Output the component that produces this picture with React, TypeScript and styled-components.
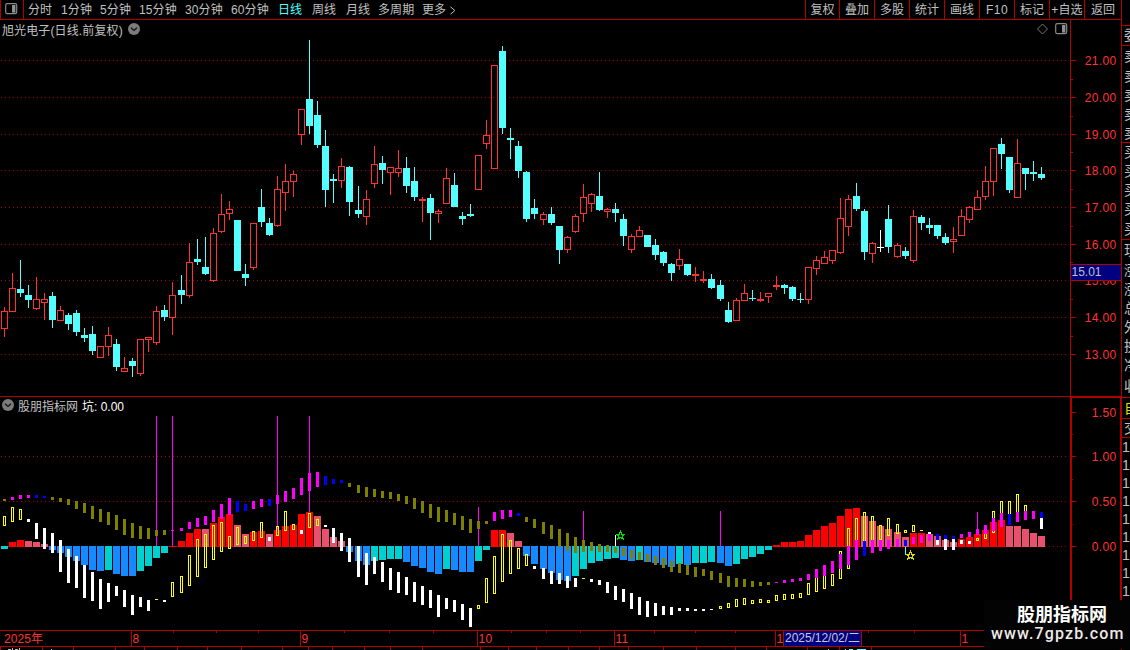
import React from "react";
import styled, { createGlobalStyle } from "styled-components";

const RED = "#b00000";
const LABEL = "#ff3232";
const CYAN = "#54ffff";
const GREY = "#c0c0c0";

const Global = createGlobalStyle`
  * { box-sizing: border-box; }
  html, body { margin: 0; padding: 0; background: #000; overflow: hidden; }
  body { font-family: "Liberation Sans", "Noto Sans CJK SC", sans-serif; font-size: 12px; }
`;

const Screen = styled.div`
  position: relative;
  display: flex;
  width: 1130px;
  height: 650px;
  overflow: hidden;
  background: #000;
  color: ${GREY};
`;
const Main = styled.div`
  display: flex;
  flex-direction: column;
  width: 1121px;
  flex: none;
`;
const TopBar = styled.div`
  display: flex;
  height: 20px;
  flex: none;
  border-bottom: 1px solid ${RED};
  line-height: 20px;
  white-space: nowrap;
`;
const IconCell = styled.div`
  display: flex;
  align-items: center;
  width: 24px;
  padding: 0 0 2px 4px;
  margin-right: 4px;
  border-left: 1px solid ${RED};
  border-right: 1px solid ${RED};
`;
const Period = styled.span<{ $w: number; $active?: boolean }>`
  width: ${(p) => p.$w}px;
  color: ${(p) => (p.$active ? CYAN : GREY)};
  letter-spacing: 0.12px;
  display: flex;
  align-items: center;
  padding-top: 1px;
  gap: 3px;
`;
const Tools = styled.div`
  display: flex;
  margin-left: auto;
`;
const Tool = styled.span<{ $w: number; $wide?: boolean }>`
  width: ${(p) => p.$w}px;
  border-left: 1px solid ${RED};
  text-align: center;
  letter-spacing: ${(p) => (p.$wide ? 0.5 : 0.1)}px;
`;
const Panel = styled.section<{ $h: number }>`
  position: relative;
  height: ${(p) => p.$h}px;
  flex: none;
  overflow: hidden;
`;
const PanelHead = styled.div<{ $h: number; $gap: number }>`
  position: absolute;
  inset: 0 0 auto 0;
  display: flex;
  align-items: center;
  height: ${(p) => p.$h}px;
  padding: 0 53px 0 2px;
  gap: ${(p) => p.$gap}px;
  white-space: nowrap;
`;
const Title = styled.span`
  letter-spacing: 0.12px;
`;
const HeadTools = styled.div`
  display: flex;
  align-items: center;
  gap: 7px;
  margin-left: auto;
`;
const Value = styled.span`
  color: #fff;
`;
const Strip = styled.aside`
  width: 9px;
  flex: none;
  overflow: hidden;
  border-left: 1px solid ${RED};
  padding-top: 25px;
`;
const StripCell = styled.div<{ $h: number; $line?: boolean; $c?: string; $one?: boolean }>`
  height: ${(p) => p.$h}px;
  line-height: ${(p) => p.$h - (p.$line ? 1 : 0)}px;
  border-top: ${(p) => (p.$line ? `1px solid ${RED}` : "0")};
  padding-left: ${(p) => (p.$one ? 0 : 2)}px;
  width: 30px;
  font-size: 14px;
  color: ${(p) => p.$c ?? GREY};
`;
const Watermark = styled.div`
  position: absolute;
  right: 0;
  bottom: 1px;
  width: 146px;
  height: 49px;
  background: #030303;
  color: #fff;
  white-space: nowrap;
`;
const MarkName = styled.div`
  padding: 1px 0 0 33px;
  font: bold 18px/24px "Noto Sans CJK SC", sans-serif;
`;
const MarkUrl = styled.div`
  padding: 1px 0 0 7px;
  font: 500 16px/15px Roboto, sans-serif;
  letter-spacing: 1.12px;
  color: #f0eaea;
`;
const Drawing = styled.svg`
  display: block;
`;

type Tone = "r" | "c" | "w";
type Candle = [Tone, number, number, number, number];

// tone, high, body top, body bottom, low
const candles: Candle[] = `
r307,311,329,337 r273,288,312,312 c260,289,293,297 c285,295,300,308 r277,299,309,310 r293,299,303,320 c292,296,320,328 r306,310,321,321 c313,315,324,330 c310,313,332,336
c328,335,338,342 c326,334,351,355 r346,346,358,358 r327,335,347,356 c339,344,367,371 r357,368,372,372 c358,361,366,377 r339,339,374,376 r337,337,340,352 r306,311,343,345
c305,310,317,321 r282,295,318,335 c275,290,295,304 r243,262,296,298 c239,259,262,265 c237,267,274,275 r228,233,281,282 r194,214,232,233 r201,209,214,220 c220,220,271,271
c264,274,278,286 r223,223,268,270 c189,207,222,227 c218,223,235,236 r176,189,226,227 r164,181,193,211 r171,174,182,197 r109,109,135,145 c40,99,126,134 c101,115,145,148
c130,146,190,207 c174,179,181,203 r158,166,181,188 c166,167,202,216 c186,210,214,218 r190,199,217,225 r146,164,184,188 c156,163,170,184 r167,167,173,195 r150,168,173,177
c157,168,186,193 c167,181,197,201 r197,199,201,222 c194,198,213,240 r209,211,214,223 r168,178,204,204 c173,185,207,207 c212,216,219,225 c204,214,216,217 r155,155,190,190
r120,135,144,149 r65,65,169,169 c46,51,128,134 c128,138,140,159 c141,146,171,178 c171,172,219,222 c199,208,214,219 r212,214,220,225 c207,214,223,225 c226,226,250,264
r236,237,250,253 r214,216,232,233 r184,197,214,222 r193,194,204,212 c172,196,210,211 r208,209,212,218 c203,209,213,222 c214,219,236,246 r234,236,250,253 r226,230,237,237
c235,235,247,247 c239,245,255,260 c251,252,263,266 c263,264,273,281 r249,259,266,270 c264,264,275,276 r267,274,276,282 r271,279,281,283 c274,279,288,289 c280,285,299,301
c302,310,322,323 r298,300,321,321 r284,293,301,301 c290,298,299,301 r292,299,301,302 r293,293,297,303 r276,285,287,290 c284,285,288,294 c286,287,299,301 c293,299,300,303
r267,267,300,304 r256,260,269,275 r251,257,264,264 r250,250,261,264 r198,218,253,254 r195,199,227,236 c183,196,209,211 c209,211,252,260 r242,243,254,263 w230,247,248,252
c205,219,247,253 r243,245,257,258 c247,251,256,259 r210,216,261,263 c215,217,223,230 c218,225,228,234 c225,225,236,239 c233,237,243,245 r227,239,242,253 r209,216,236,236
r206,207,220,223 r190,197,210,210 r166,181,197,200 r148,148,182,196 c138,144,154,169 c157,157,190,193 r139,163,198,198 c168,168,174,190 c161,172,174,181 c167,174,178,180
`
  .trim()
  .split(/\s+/)
  .map((s) => {
    const n = s.slice(1).split(",").map(Number);
    return [s[0] as Tone, n[0], n[1], n[2], n[3]];
  });

// histogram: colour key and the far edge from the zero line
const bars = `
t549 r542 r540 p541 p542 p544 b550 b553 b557 b561 b565 b570 b571 t570 b574 b576 b576 t571 t566 t558 t553 r546 r541 r533 r529 p529 r523 r517 r514 p525
p534 r532 r531 p534 r530 r526 r525 r514 r512 p516 p529 p537 p541 b552 b561 b565 t561 t560 t559 t559 b562 b566 b568 b572 b574 t569 b570 b572 b572 t561
t550 r530 r530 p533 p541 b556 b564 b569 b573 b580 b581 t576 t569 t563 t561 t559 t558 b560 b561 t560 b562 b563 b565 b567 t564 b565 t563 t563 t562 b563
b566 t564 t559 t557 t554 t550 r545 r542 r542 r541 r535 r530 r526 r523 r516 r509 r508 p516 p521 p526 p529 p532 p537 r533 r533 p534 p536 p540 p542 r539
r537 r534 r530 r522 r520 p526 p526 p529 p533 p536
`
  .trim()
  .split(/\s+/);

const barFill: Record<string, string> = {
  t: "#00d0d0",
  b: "#1589ff",
  r: "#ff0000",
  p: "#e8506e",
};

type Dash = { k: string; a: number; b: number };
const parseDashes = (s: string): Dash[] =>
  s
    .trim()
    .split(/\s+/)
    .map((t) => {
      const [a, b] = t.slice(1).split("-").map(Number);
      return { k: t[0], a, b };
    });

const trend = parseDashes(`
O499-501 M497-500 M495-499 M495-498 B495-498 B496-498 O497-500 O498-502 O499-505 O501-509 O503-513 O506-519 O509-522 O512-525 O515-530 O519-535 O523-538 O526-539 O528-539 O530-536
O530-535 M530-531 M528-531 M522-529 M518-527 M516-525 M510-522 M504-519 M498-515 B501-512 B504-511 M501-509 M499-507 B499-506 M495-504 M491-502 M488-499 M478-495 M473-491 M472-487
B476-485 B479-484 B480-483 O483-487 O485-493 O487-497 O489-497 O491-498 O492-499 O494-501 O496-504 O498-509 O501-513 O504-518 O507-522 O510-522 O513-525 O516-530 O519-533 O521-529
O521-524 M512-521 M510-519 M510-517 B513-516 O517-522 O519-528 O522-534 O525-539 O529-547 O533-551 O537-553 O540-552 O542-551 O544-552 O545-552 O547-553 O548-556 O550-559 O552-560
O554-562 O556-565 O558-568 O561-572 O563-573 O565-575 O567-577 O569-576 O571-580 O573-583 O576-587 O578-587 O579-587 O581-587 O582-586 O582-585 M582-583 M580-583 M579-582 M578-581
M574-580 M569-578 M565-576 M561-573 M554-569 M546-565 M540-560 B541-556 M540-553 M540-551 M540-549 M539-547 B540-546 M537-544 M535-543 M534-541 B534-540 B535-539 B536-539 M534-538
M532-537 M529-535 M525-534 M518-531 M513-527 B514-525 M512-522 M511-520 M511-519 B512-518
`);

const signal = parseDashes(`
Y516-526 Y507-522 Y509-520 W519-522 W523-539 W528-549 W533-553 W540-572 W549-583 W556-588 W565-598 W572-601 W579-609 W583-602 W586-596 W590-607 W595-615 W597-607 W600-611 Y599-600
W600-602 Y582-597 Y576-593 Y555-586 Y539-577 Y534-568 Y525-560 Y522-552 Y536-549 Y527-545 Y536-544 Y531-541 Y522-538 W537-541 Y526-536 Y511-531 Y524-530 W530-534 Y513-528 Y519-526
W525-527 W528-543 W533-551 W538-562 W546-577 W553-585 W557-574 W562-582 W568-590 W572-593 W577-595 W582-602 W586-605 W590-608 W595-617 W598-609 W600-612 W604-620 W608-627 Y605-609
Y578-603 Y556-594 Y534-582 Y540-574 Y548-569 Y554-566 W566-569 W568-579 W571-584 W573-584 W576-588 W578-587 Y578-579 W579-582 W580-585 W582-593 W586-600 W589-602 W593-609 W597-615
W601-617 W603-616 W606-615 W607-615 W608-611 W608-611 W609-611 W609-611 W609-610 Y606-609 Y603-608 Y599-607 Y598-605 Y600-604 Y599-603 Y600-603 Y595-601 Y594-600 Y594-599 Y593-598
Y583-595 Y576-592 Y574-589 Y574-586 Y551-579 Y528-569 Y518-545 Y512-543 Y516-541 Y525-540 Y518-536 Y524-534 Y530-533 Y525-532 Y530-531 W532-535 W538-545 W539-550 W539-550 W540-544
W541-544 Y538-541 Y532-539 Y511-533 Y501-515 Y501-515 Y494-513 Y505-512 W512-512 W518-529
`);

const dashFill: Record<string, string> = {
  O: "#808000",
  M: "#ff00ff",
  B: "#0000ff",
  W: "#ffffff",
  Y: "#ffff00",
};

// bar spacing is slightly over 8px, so the pitch slips by one at these indices
const slips = [22, 44, 67, 89, 111];
const xAt = (i: number) => 4 + 8 * i + slips.filter((s) => i >= s).length;

const priceGrid: [number, string][] = [
  [60, "21.00"], [97, "20.00"], [134, "19.00"], [170, "18.00"], [207, "17.00"],
  [244, "16.00"], [280, "15.00"], [317, "14.00"], [354, "13.00"],
];
const priceMinor = [79, 116, 152, 189, 226, 262, 299, 336];
const spikes: [number, number, number, string][] = [
  [156, 416, 546, "#ff00ff"], [172, 416, 546, "#ff00ff"], [277, 416, 530, "#ff00ff"],
  [309, 416, 513, "#ff00ff"], [478, 507, 546, "#ff00ff"], [583, 511, 546, "#ff00ff"],
  [720, 511, 546, "#ff00ff"], [977, 512, 531, "#ff00ff"], [615, 535, 546, "#ffffff"],
  [905, 546, 555, CYAN],
];
const months: [number, string][] = [[131, "8"], [300, "9"], [477, "10"], [614, "11"], [775, "1"], [960, "1"]];
const axisTicks = [173, 216, 258, 344, 389, 433, 511, 546, 580, 654, 695, 735, 868, 914];
const tabTicks = [0, 42, 73, 115, 144, 177, 207, 241, 282, 308, 332, 364, 390, 422, 480, 508, 536, 568, 599, 628, 663, 696, 735, 766, 807, 839, 871];

const GridLine = ({ y }: { y: number }) => (
  <line x1={1} x2={1067} y1={y + 0.5} y2={y + 0.5} stroke="#a80000" strokeDasharray="1 3" />
);

const AxisText = ({ y, children }: { y: number; children: string }) => (
  <text x={1116.5} y={y + 5} textAnchor="end" fontSize={12} letterSpacing={0.35} fill={LABEL}>
    {children}
  </text>
);

const CandleShape = ({ i, c }: { i: number; c: Candle }) => {
  const [tone, hi, top, bot, lo] = c;
  const x = xAt(i);
  const fill = tone === "r" ? LABEL : tone === "c" ? CYAN : "#fff";
  const hollow = tone === "r" && bot - top > 2;
  return (
    <g fill={fill}>
      {!hollow && <rect x={x} y={hi} width={1} height={lo - hi} />}
      {hollow && <rect x={x} y={hi} width={1} height={top - hi} />}
      {hollow && <rect x={x} y={bot} width={1} height={lo - bot} />}
      {hollow ? (
        <rect x={x - 2.5} y={top + 0.5} width={6} height={bot - top - 1} fill="none" stroke={fill} />
      ) : (
        <rect x={x - 3} y={top} width={7} height={bot - top} />
      )}
    </g>
  );
};

const DashShape = ({ i, d }: { i: number; d: Dash }) => {
  const x = xAt(i);
  const c = dashFill[d.k];
  if (d.k === "Y" && d.b - d.a > 2)
    return <rect x={x - 0.5} y={d.a + 0.5} width={2} height={d.b - d.a - 1} fill="none" stroke={c} />;
  return <rect x={x - 1} y={d.a} width={3} height={d.b - d.a} fill={c} />;
};

const Star = ({ x, y, c }: { x: number; y: number; c: string }) => (
  <path
    transform={`translate(${x} ${y})`}
    d="M0-4L1.2-1.3H4.2L1.9.7L2.8 3.8L0 2L-2.8 3.8L-1.9.7L-4.2-1.3H-1.2Z"
    fill="none"
    stroke={c}
    strokeWidth={1.1}
  />
);

const PriceChart = () => (
  <Drawing width={1121} height={377} viewBox="0 20 1121 377" shapeRendering="crispEdges">
    {priceGrid.map(([y]) => <GridLine key={y} y={y} />)}
    {candles.map((c, i) => <CandleShape key={i} i={i} c={c} />)}
    <g fill={RED}>
      <rect x={1070} y={20} width={1} height={377} />
      <rect x={0} y={396} width={1121} height={1} />
      {priceGrid.map(([y]) => <rect key={y} x={1071} y={y} width={5} height={1} />)}
      {priceMinor.map((y) => <rect key={y} x={1071} y={y} width={2} height={1} />)}
    </g>
    {priceGrid.map(([y, t]) => <AxisText key={y} y={y}>{t}</AxisText>)}
    <rect x={1070} y={264} width={51} height={17} fill={RED} />
    <rect x={1071} y={265} width={50} height={15} fill="#000080" />
    <text x={1071.5} y={276} fontSize={12} fill={GREY}>15.01</text>
  </Drawing>
);

const IndicatorChart = () => (
  <Drawing width={1121} height={233} viewBox="0 397 1121 233" shapeRendering="crispEdges">
    {[456, 501, 546].map((y) => <GridLine key={y} y={y} />)}
    {spikes.map(([x, a, b, c]) => <rect key={x} x={x} y={a} width={1} height={b - a} fill={c} />)}
    {bars.map((s, i) => {
      const e = Number(s.slice(1));
      const up = s[0] === "r" || s[0] === "p";
      return (
        <g key={i}>
          {up && <rect x={xAt(i) - 4} y={546} width={9} height={1} fill="#c00000" />}
          <rect x={xAt(i) - 3} y={up ? e : 546} width={7} height={up ? 547 - e : e - 546} fill={barFill[s[0]]} />
        </g>
      );
    })}
    {signal.map((d, i) => <DashShape key={i} i={i} d={d} />)}
    {trend.map((d, i) => <DashShape key={i} i={i} d={d} />)}
    <Star x={620.5} y={535.5} c="#00e000" />
    <Star x={910.5} y={555.5} c="#e0e000" />
    <g fill={RED}>
      <rect x={1070} y={397} width={2} height={233} />
      <rect x={1120} y={397} width={1} height={233} />
      <rect x={1070} y={397} width={51} height={1} />
      {[412, 456, 501, 546].map((y) => <rect key={y} x={1072} y={y} width={4} height={1} />)}
      {[434, 479, 524].map((y) => <rect key={y} x={1072} y={y} width={1} height={1} />)}
    </g>
    <AxisText y={412}>1.50</AxisText>
    <AxisText y={456}>1.00</AxisText>
    <AxisText y={501}>0.50</AxisText>
    <AxisText y={546}>0.00</AxisText>
  </Drawing>
);

const TimeAxis = () => (
  <Drawing width={1121} height={20} viewBox="0 630 1121 20" shapeRendering="crispEdges">
    <g fill={RED}>
      <rect x={0} y={630} width={1121} height={1} />
      <rect x={0} y={646} width={1121} height={1} />
      {months.map(([x]) => <rect key={x} x={x} y={630} width={1} height={17} />)}
      {axisTicks.map((x) => <rect key={x} x={x} y={631} width={1} height={2} />)}
      {tabTicks.map((x) => <rect key={x} x={x} y={647} width={1} height={3} />)}
      <rect x={783} y={630} width={79} height={17} />
    </g>
    <rect x={784} y={631} width={77} height={15} fill="#000080" />
    <g fontSize={12} fill={LABEL}>
      <text x={4} y={643} letterSpacing={0.1}>2025年</text>
      {months.map(([x, t]) => <text key={x} x={x + 1.5} y={643} letterSpacing={0.3}>{t}</text>)}
    </g>
    <text x={785} y={642} fontSize={12} fill="#c8c8d0" textLength={75}>2025/12/02/二</text>
    {/* top edges of the tab captions that run below the window */}
    <g fill={GREY}>
      <rect x={8} y={649} width={3} height={1} />
      <rect x={12} y={648} width={1} height={2} />
      <rect x={15} y={649} width={3} height={1} />
      <rect x={19} y={648} width={1} height={2} />
      <rect x={51} y={649} width={1} height={1} />
      <rect x={828} y={649} width={1} height={1} />
    </g>
    <g fill={CYAN}>
      <rect x={845} y={649} width={1} height={1} />
      <rect x={849} y={649} width={4} height={1} />
      <rect x={857} y={649} width={9} height={1} />
    </g>
  </Drawing>
);

const PanelIcon = () => (
  <svg width={13} height={12} viewBox="0 0 13 12">
    <rect x={0.7} y={0.7} width={11} height={10} rx={1.6} fill="none" stroke="#8a8a8a" strokeWidth={1.2} />
    <rect x={7} y={2} width={3.4} height={7.6} fill="#909090" />
  </svg>
);

const ChevronDot = () => (
  <svg width={12} height={12} viewBox="0 0 12 12">
    <circle cx={6} cy={6} r={6} fill="#7c7c7c" />
    <path d="M3 4.8L6 7.4L9 4.8" fill="none" stroke="#111" strokeWidth={1.3} />
  </svg>
);

const periods: [string, number][] = [
  ["分时", 33], ["1分钟", 39], ["5分钟", 39], ["15分钟", 46], ["30分钟", 46], ["60分钟", 47],
  ["日线", 34], ["周线", 34], ["月线", 32], ["多周期", 44], ["更多", 36],
];
const tools: [string, number][] = [
  ["复权", 34], ["叠加", 35], ["多股", 35], ["统计", 35], ["画线", 35], ["F10", 35], ["标记", 35], ["+自选", 35], ["返回", 37],
];
const stripRows: { t: string; h: number; line?: boolean; c?: string; one?: boolean }[] = [
  { t: "委", h: 20, line: true },
  { t: "卖", h: 22, line: true },
  { t: "卖", h: 19 }, { t: "卖", h: 19 }, { t: "卖", h: 19 }, { t: "卖", h: 18 },
  { t: "买", h: 20, line: true },
  { t: "买", h: 19 }, { t: "买", h: 19 }, { t: "买", h: 19 }, { t: "买", h: 20 },
  { t: "现", h: 22, line: true },
  { t: "涨", h: 19 }, { t: "涨", h: 19 }, { t: "总", h: 19 }, { t: "外", h: 19 },
  { t: "换", h: 19 }, { t: "净", h: 19 }, { t: "收", h: 22 },
  { t: "自", h: 21, line: true, c: "#e0e000" },
  { t: "交", h: 19, line: true },
  { t: "1", h: 19, line: true, one: true },
  ...Array.from({ length: 8 }, () => ({ t: "1", h: 18, one: true })),
];

export default function App() {
  return (
    <>
      <Global />
      <Screen>
        <Main>
          <TopBar>
            <IconCell><PanelIcon /></IconCell>
            {periods.map(([t, w]) => (
              <Period key={t} $w={w} $active={t === "日线"}>
                {t}
                {t === "更多" && (
                  <svg width={8} height={9} viewBox="0 0 8 9">
                    <path d="M1.5 .8L5.8 4.5L1.5 8.2" fill="none" stroke={GREY} />
                  </svg>
                )}
              </Period>
            ))}
            <Tools>
              {tools.map(([t, w]) => <Tool key={t} $w={w} $wide={t === "F10"}>{t}</Tool>)}
            </Tools>
          </TopBar>
          <Panel $h={377}>
            <PriceChart />
            <PanelHead $h={18} $gap={5}>
              <Title>旭光电子(日线.前复权)</Title>
              <ChevronDot />
              <HeadTools>
                <svg width={12} height={12} viewBox="0 0 12 12">
                  <path d="M6.5 1L11.5 6L6.5 11L1.5 6Z" fill="none" stroke="#858585" strokeWidth={0.9} />
                </svg>
                <PanelIcon />
              </HeadTools>
            </PanelHead>
          </Panel>
          <Panel $h={233}>
            <IndicatorChart />
            <PanelHead $h={16} $gap={4}>
              <ChevronDot />
              <span>股朋指标网</span>
              <Value>坑: 0.00</Value>
            </PanelHead>
          </Panel>
          <Panel $h={20}>
            <TimeAxis />
          </Panel>
        </Main>
        <Strip>
          {stripRows.map((r, i) => (
            <StripCell key={i} $h={r.h} $line={r.line} $c={r.c} $one={r.one}>{r.t}</StripCell>
          ))}
        </Strip>
        <Watermark>
          <MarkName>股朋指标网</MarkName>
          <MarkUrl>www.7gpzb.com</MarkUrl>
        </Watermark>
      </Screen>
    </>
  );
}
